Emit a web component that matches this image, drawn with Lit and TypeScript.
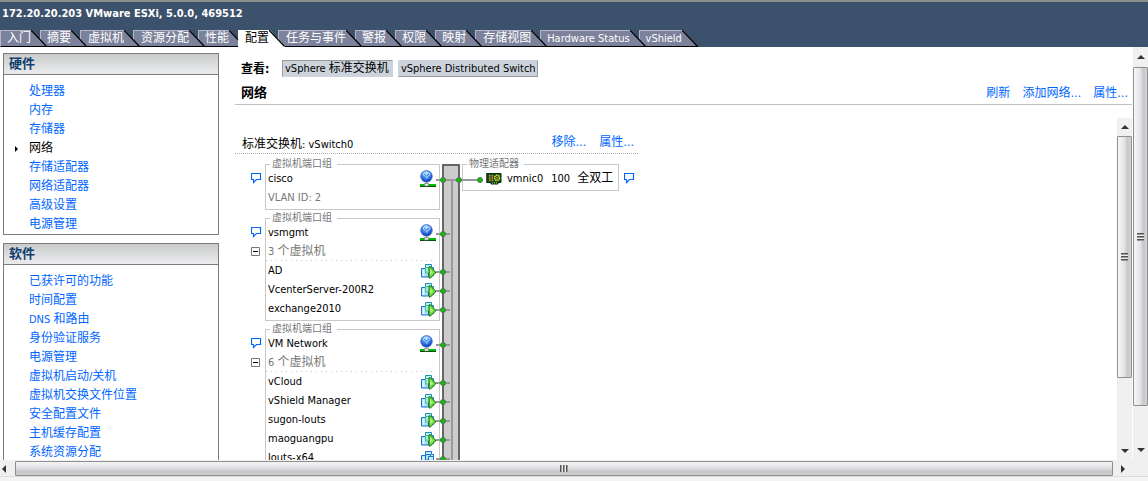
import { LitElement, html, css, svg, nothing } from "lit";
import { customElement, property } from "lit/decorators.js";
import { classMap } from "lit/directives/class-map.js";
import { styleMap } from "lit/directives/style-map.js";

const TABS = [
  "入门", "摘要", "虚拟机", "资源分配", "性能", "配置", "任务与事件",
  "警报", "权限", "映射", "存储视图", "Hardware Status", "vShield",
];

const HARDWARE = ["处理器", "内存", "存储器", "网络", "存储适配器", "网络适配器", "高级设置", "电源管理"];

const SOFTWARE = [
  "已获许可的功能", "时间配置", "DNS 和路由", "身份验证服务", "电源管理", "虚拟机启动/关机",
  "虚拟机交换文件位置", "安全配置文件", "主机缓存配置", "系统资源分配",
];

interface Vm { name: string; on: boolean; }
interface PortGroup { name: string; vlan?: string; vms: Vm[]; summary?: string; }

const PORT_GROUPS: PortGroup[] = [
  { name: "cisco", vlan: "VLAN ID: 2", vms: [] },
  {
    name: "vsmgmt", summary: "3 个虚拟机",
    vms: [
      { name: "AD", on: true },
      { name: "VcenterServer-200R2", on: true },
      { name: "exchange2010", on: true },
    ],
  },
  {
    name: "VM Network", summary: "6 个虚拟机",
    vms: [
      { name: "vCloud", on: true },
      { name: "vShield Manager", on: true },
      { name: "sugon-louts", on: true },
      { name: "maoguangpu", on: true },
      { name: "louts-x64", on: false },
    ],
  },
];

// Chinese runs are set one pixel larger than the Latin text around them.
const label = (text: string) =>
  text.split(/([\u2026\u4e00-\u9fff]+)/).filter(Boolean).map((run) =>
    /[\u4e00-\u9fff]/.test(run) ? html`<span class="han">${run}</span>` : run);

const bubbleIcon = html`<svg width="11" height="11" viewBox="0 0 11 11" aria-hidden="true">
  <path d="M.5 .5h9v6h-4l-3 3v-3h-2z" fill="#fff" stroke="#0066ff" stroke-width="1.2"/>
</svg>`;

const globeIcon = html`<svg width="16" height="17" viewBox="0 0 16 17" aria-hidden="true">
  <defs><radialGradient id="g" cx=".45" cy=".25" r=".75">
    <stop offset="0" stop-color="#d4eaff"/><stop offset=".4" stop-color="#4c95f2"/><stop offset="1" stop-color="#0838b4"/>
  </radialGradient></defs>
  <circle cx="6.500" cy="6.300" r="5.800" fill="url(#g)" stroke="#2358c0" stroke-width=".6"/>
  <path d="M2.600 4q2-2.600 4-2q2.800-.3 4 2q-.8 2.400-2.600 2.600l-1 2.800l-1.600-2.800q-2.200-.4-2.800-2.600z" fill="#b9dcff" fill-opacity=".75"/>
  <path d="M4.200 4.200l2.300 1.800l2.500-2" fill="none" stroke="#2a6be0"/>
  <path d="M5.500 12h2v2h-2z" fill="#999"/>
  <path d="M0 14h16v2h-16z" fill="#0b0"/>
  <path d="M0 16h16v1h-16z" fill="#064a06"/>
  <path d="M4.500 13.500h4v2.500h-4z" fill="#eee" stroke="#777" stroke-width=".7"/>
</svg>`;

const vmIcon = (on: boolean) => html`<svg width="16" height="16" viewBox="0 0 16 16" aria-hidden="true">
  <path d="M5.500 1.500h6v3h2v8h-8z" fill="#c9f0f2" stroke=${on ? "#1c8fb0" : "#1b6fd0"}/>
  <path d="M1.500 5.500h4v-1h3v9.500h-7z" fill="#a9dbfb" stroke="#1b6fd0"/>
  <path d="M5.500 4.500h5v5.500h-5z" fill="#a5ecd5" stroke=${on ? "#3ac39a" : "#1b6fd0"}/>
  <path d="M2.500 6.500h2v6.500h-2z" fill="#e2f5ff"/>
  ${on ? svg`<path d="M9 3.800h1.500l5 5.200v1l-5 5h-1.500z" fill="#6fdc3c" stroke="#14681a"/>
  <path d="M10 6v6l3-2.500z" fill="#b4f57c"/>` : svg`<path d="M8.500 6.500h5v8h-5z" fill="#c9ecfb" stroke="#1b6fd0"/>`}
</svg>`;

const nicIcon = html`<svg width="16" height="14" viewBox="0 0 16 14" aria-hidden="true">
  <path d="M0 1h2v10h-2z" fill="#777"/>
  <path d="M1 1.500h14v9h-3v1.500h-7v-1.500h-4z" fill="#0d5220" stroke="#08300e"/>
  <path d="M3 3h1.500v1.500h-1.500zM5.500 3h1.500v1.500h-1.500zM3 5.200h1.500v1.500h-1.500zM5.500 5.200h1.500v1.500h-1.500zM3 7.400h1.500v1.500h-1.500zM5.500 7.400h1.500v1.500h-1.500z" fill="#f5841c"/>
  <circle cx="11" cy="5.800" r="2.500" fill="none" stroke="#f2e22c" stroke-width="1.500" stroke-dasharray="1.500 .6"/>
  <path d="M10.300 5h1.500v1.500h-1.500z" fill="#f28a1c"/>
  <path d="M6 11h6" stroke="#e0c030" stroke-dasharray="1 1"/>
</svg>`;

const base = css`
  *, *::before, *::after { box-sizing: border-box; }
  button {
    font: inherit; color: inherit; background: none; border: 0; padding: 0; margin: 0;
    display: block; cursor: pointer;
  }
  a { color: #0066ff; text-decoration: none; }
  svg { display: block; }
  .han { font-size: 12px; }
`;

@customElement("scroll-bar")
export class ScrollBar extends LitElement {
  @property({ type: Boolean, reflect: true }) horizontal = false;
  @property({ type: Number }) extent = 100;

  static styles = [base, css`
    :host { display: flex; flex-direction: column; width: 15px; flex: none; background: #f0f0f0; --end: 18px; }
    :host([horizontal]) { flex-direction: row; width: auto; height: 15px; }
    .end { flex: none; height: var(--end); display: flex; align-items: center; justify-content: center; }
    :host([horizontal]) .end { height: 15px; width: 20px; }
    :host([horizontal]) .first { width: 15px; padding-right: 6px; }
    .track { flex: 1; min-height: 0; min-width: 0; }
    .thumb {
      display: flex; align-items: center; justify-content: center;
      border: 1px solid #8f8f92; border-radius: 1px;
      background: linear-gradient(90deg, #f6f6f6, #e6e6e8 45%, #c6c6ca 75%, #d6d6d8);
    }
    :host([horizontal]) .thumb {
      height: 15px;
      background: linear-gradient(#f4f4f4, #e4e4e6 40%, #c6c6ca 75%, #d0d0d2);
    }
    .grip { width: 7px; height: 8px; background: repeating-linear-gradient(#555 0 1px, #999 1px 2px, #eee 2px 3px); }
    :host([horizontal]) .grip { width: 8px; height: 7px; background: repeating-linear-gradient(90deg, #555 0 1px, #999 1px 2px, #eee 2px 3px); }
  `];

  render() {
    const size = `${this.extent}%`;
    const [back, forth] = this.horizontal ? ["M5 0v8l-4-4z", "M2 0v8l4-4z"] : ["M0 6h8l-4-4z", "M0 2h8l-4 4z"];
    const arrow = (d: string) => html`<svg width="8" height="8" viewBox="0 0 8 8"><path d=${d} fill="#333"/></svg>`;
    return html`
      <button class="end first" aria-label="后退">${arrow(back)}</button>
      <div class="track">
        <div class="thumb" style=${styleMap(this.horizontal ? { width: size } : { height: size })}>
          <span class="grip"></span>
        </div>
      </div>
      <button class="end" aria-label="前进">${arrow(forth)}</button>`;
  }
}

@customElement("nav-panel")
export class NavPanel extends LitElement {
  @property() heading = "";
  @property({ attribute: false }) items: string[] = [];
  @property() current = "";

  static styles = [base, css`
    :host { display: block; border: 1px solid #7d7b7b; background: #fff; }
    h2 {
      margin: 0; padding: 0 5px; font-size: 13px; line-height: 20px; color: #103f6e;
      border-bottom: 1px solid #7d7b7b; background: linear-gradient(#c9cccb, #ececee);
    }
    ul { list-style: none; margin: 0; padding: 7px 0 0; }
    li { height: 19px; line-height: 19px; padding-left: 25px; white-space: nowrap; }
    .current { display: flex; align-items: center; padding-left: 11px; gap: 11px; }
    .current a { color: #000; }
  `];

  render() {
    return html`<h2>${this.heading}</h2>
      <ul>${this.items.map((t) => {
        const on = t === this.current;
        return html`<li class=${classMap({ current: on })}>
          ${on ? html`<svg width="3" height="6" viewBox="0 0 3 6"><path d="M0 0l3 3l-3 3z"/></svg>` : nothing}<a href="#">${label(t)}</a></li>`;
      })}</ul>`;
  }
}

@customElement("port-group")
export class PortGroupView extends LitElement {
  @property({ attribute: false }) group!: PortGroup;

  static styles = [base, css`
    :host { display: flex; }
    .side { width: 30px; padding: 10px 0 0 16px; flex: none; }
    .side button { height: 19px; display: flex; align-items: center; }
    fieldset { flex: 1; min-width: 0; margin: 0; padding: 0 0 2px; border: 1px solid #c8c8c8; }
    legend { margin-left: 4px; padding: 0 5px 0 2px; font-size: 10px; line-height: 10px; color: #777; }
    .row { position: relative; height: 19px; line-height: 19px; padding: 0 3px 0 2px; display: flex; justify-content: space-between; align-items: center; white-space: nowrap; }
    .muted { color: #777; }
    .dotted { background: repeating-linear-gradient(90deg, #c4c4c4 0 1px, transparent 1px 5px) 0 100% / 166px 1px no-repeat; }
    .wire { position: absolute; left: 170px; top: 10px; width: 14px; height: 2px; background: #999; }
    .wire::after {
      content: ""; position: absolute; left: 4px; top: -2px; width: 6px; height: 6px;
      border: 1px solid #5c6b5c; border-radius: 3px; background: #00c800;
    }
  `];

  render() {
    const g = this.group;
    return html`
      <div class="side">
        <button aria-label="${g.name} 信息">${bubbleIcon}</button>
        ${g.summary ? html`<button aria-label="折叠">
          <svg width="9" height="9" viewBox="0 0 9 9"><path d="M.5.5h8v8h-8z" fill="#fff" stroke="#777"/><path d="M2 4.500h5" stroke="#000"/></svg>
        </button>` : nothing}
      </div>
      <fieldset>
        <legend>虚拟机端口组</legend>
        <div class="row"><span>${g.name}</span>${globeIcon}<i class="wire"></i></div>
        ${g.vlan ? html`<div class="row muted">${g.vlan}</div>` : nothing}
        ${g.summary ? html`<div class="row muted dotted"><span>${label(g.summary)}</span></div>` : nothing}
        ${g.vms.map((v) => html`<div class="row"><span>${v.name}</span>${vmIcon(v.on)}<i class="wire"></i></div>`)}
      </fieldset>`;
  }
}

@customElement("virtual-switch")
export class VirtualSwitch extends LitElement {
  static styles = [base, css`
    :host { display: block; width: 403px; }
    header { display: flex; align-items: center; gap: 13px; height: 24px; padding: 0 4px 0 7px; border-bottom: 1px dotted #aaa; }
    h3 { flex: 1; margin: 0; padding-top: 5px; font-size: 11px; line-height: 18px; font-weight: normal; }
    header a { font-size: 12px; }
    .diagram { display: grid; grid-template-columns: 205px 18px 1fr; column-gap: 2px; padding-top: 5px; }
    .groups { display: flex; flex-direction: column; gap: 3px; }
    .bar { margin-top: 5px; border: 2px solid #666; background: #ccc; display: flex; justify-content: center; }
    .bar::before { content: ""; width: 2px; margin: 14px 0 0 2px; background: #999; }
    .uplink { display: flex; align-items: flex-start; gap: 5px; }
    fieldset { position: relative; width: 157px; margin: 0; padding: 0 0 2px; border: 1px solid #c8c8c8; }
    legend { margin-left: 4px; padding: 0 5px 0 2px; font-size: 10px; line-height: 10px; color: #777; }
    .row { position: relative; display: flex; align-items: center; height: 19px; line-height: 19px; padding-left: 23px; white-space: nowrap; }
    .name { margin-left: 5px; }
    .speed { margin: 0 7px 0 8px; }
    .uplink button { margin-top: 14px; }
    .wire { position: absolute; left: -13px; top: 10px; width: 30px; height: 2px; background: #999; }
    .dot { position: absolute; top: -2px; width: 6px; height: 6px; border: 1px solid #5c6b5c; border-radius: 3px; background: #00c800; }
    .near { left: 6px; }
    .far { right: -3px; }
  `];

  render() {
    return html`
      <header><h3>${label("标准交换机: vSwitch0")}</h3><a href="#">移除…</a><a href="#">属性…</a></header>
      <div class="diagram">
        <div class="groups">${PORT_GROUPS.map((g) => html`<port-group .group=${g}></port-group>`)}</div>
        <div class="bar"></div>
        <div class="uplink">
          <fieldset>
            <legend>物理适配器</legend>
            <div class="row">
              <i class="wire"><b class="dot near"></b><b class="dot far"></b></i>
              ${nicIcon}<span class="name">vmnic0</span><span class="speed">100</span><span class="han">全双工</span>
            </div>
          </fieldset>
          <button aria-label="vmnic0 信息">${bubbleIcon}</button>
        </div>
      </div>`;
  }
}

@customElement("app-root")
export class AppRoot extends LitElement {
  static styles = [base, css`
    :host {
      display: flex; flex-direction: column; height: 100vh; overflow: hidden; background: #fff; color: #000;
      font: 11px/16px "DejaVu Sans Condensed", "Noto Sans CJK SC", sans-serif;
    }
    .top { flex: none; background: #3c516b; border-top: 2px solid #8a8f8a; }
    h1 { margin: 0; padding: 3px 2px 0; font-size: 11px; line-height: 18px; height: 28px; color: #fff; }
    .tabs { display: flex; height: 17px; }
    .tab { position: relative; display: flex; height: 17px; margin-right: -7px; color: #fff; line-height: 15px; white-space: nowrap; }
    .text { height: 17px; padding-left: 6px; background: #7c829b; border-top: 1px solid #b4b8c8; border-bottom: 1px solid #000; border-left: 1px solid #b4b8c8; }
    .wide .text { padding-left: 7px; }
    .active .text { background: #fff; color: #000; border-color: #fff; }
    .edge { fill: #7c829b; }
    .active .edge { fill: #fff; }
    .middle { flex: 1; min-height: 0; display: flex; overflow: hidden; }
    aside { width: 216px; flex: none; margin: 6px 16px 0 3px; display: flex; flex-direction: column; gap: 8px; }
    nav-panel { flex: none; }
    main { flex: 1; min-width: 0; margin-right: 1px; display: flex; flex-direction: column; }
    .views { display: flex; align-items: center; gap: 5px; height: 35px; padding: 8px 6px 0; flex: none; }
    .views b { width: 36px; font-size: 12px; }
    .view { height: 17px; line-height: 15px; padding: 0 1px 0 2px; background: #ccd3dc; border: 1px solid #ccd3dc; white-space: nowrap; }
    .view { border-right-color: #999; border-bottom-color: #999; }
    .pressed { padding-right: 3px; border-color: #999 #ccd3dc #ccd3dc #999; }
    .title { display: flex; align-items: center; gap: 12px; height: 23px; padding: 0 4px 0 6px; border-bottom: 1px solid #c0c0c0; flex: none; }
    .title a { font-size: 12px; }
    h2 { flex: 1; margin: 0; font-size: 13px; line-height: 20px; }
    .canvas { flex: 1; min-height: 0; display: flex; justify-content: space-between; margin-top: 13px; }
    .content { flex: 1; overflow: hidden; padding-top: 12px; }
    .outer { --end: 20px; }
    .bottom { display: flex; flex: none; padding: 1px 15px 0 0; background: #f0f0f0; }
    .bottom scroll-bar { flex: 1; }
    .foot { flex: none; height: 5px; background: #f4f4f4; border-top: 1px solid #dcdcdc; }
  `];

  render() {
    return html`
      <div class="top">
        <h1>172.20.20.203 VMware ESXi, 5.0.0, 469512</h1>
        <div class="tabs" role="tablist">
          ${TABS.map((t, i) => {
            const active = t === "配置";
            return html`<button role="tab" aria-selected=${active}
              class=${classMap({ tab: true, active, wide: t.length > 2 && t.length < 6 })}
              style=${styleMap({ zIndex: String(active ? 30 : 20 - i) })}>
              <span class="text">${label(t)}</span>
              <svg width="16" height="17" viewBox="0 0 16 17">
                <path class="edge" d="M0 0h1l15 16.500v.5h-16z"/>
                <path d="M0 0l15.500 16.500" stroke="#000" stroke-width="1.200"/>
                ${active ? nothing : svg`<path d="M0 16.500h16" stroke="#000"/>`}
              </svg>
            </button>`;
          })}
        </div>
      </div>
      <div class="middle">
        <aside>
          <nav-panel heading="硬件" .items=${HARDWARE} current="网络"></nav-panel>
          <nav-panel heading="软件" .items=${SOFTWARE}></nav-panel>
        </aside>
        <main>
          <div class="views">
            <b>查看:</b>
            <button class="view pressed">${label("vSphere 标准交换机")}</button>
            <button class="view">vSphere Distributed Switch</button>
          </div>
          <div class="title"><h2>网络</h2><a href="#">刷新</a><a href="#">添加网络…</a><a href="#">属性…</a></div>
          <div class="canvas">
            <div class="content"><virtual-switch></virtual-switch></div>
            <scroll-bar .extent=${79}></scroll-bar>
          </div>
        </main>
        <scroll-bar class="outer" .extent=${91}></scroll-bar>
      </div>
      <div class="bottom"><scroll-bar horizontal .extent=${100}></scroll-bar></div>
      <div class="foot"></div>`;
  }
}
